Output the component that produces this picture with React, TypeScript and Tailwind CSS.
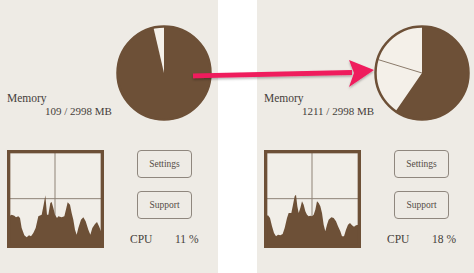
const brown = "#6d5037";

const wedge = (deg: number, r = 47, c = 48) => {
  const rad = (deg * Math.PI) / 180;
  const x = c - r * Math.sin(rad);
  const y = c - r * Math.cos(rad);
  return `M${c} ${c} L${c} ${c - r} A${r} ${r} 0 ${deg > 180 ? 1 : 0} 0 ${x.toFixed(2)} ${y.toFixed(2)} Z`;
};

const leftChart =
  "12,205 20,200 28,203 33,208 40,205 45,210 50,240 58,262 65,268 72,262 78,265 85,255 92,240 100,205 110,200 116,170 121,142 126,200 130,200 136,165 140,162 145,180 150,200 156,210 160,205 170,208 178,205 184,180 188,163 195,170 200,195 205,215 210,245 215,260 220,240 228,215 235,208 242,220 250,245 256,260 262,240 270,228 276,222 282,235 288,250 290,250";
const rightChart =
  "12,205 18,202 24,210 30,235 36,255 42,265 48,260 55,262 62,258 68,240 75,210 80,195 88,195 93,170 98,145 102,140 106,175 110,195 115,180 120,160 125,170 130,190 135,200 140,205 145,203 150,205 155,200 160,185 165,160 170,165 175,175 180,195 185,230 190,250 195,230 200,215 208,208 215,210 222,220 228,235 235,250 240,265 246,265 252,245 258,230 264,225 270,232 276,236 282,232 290,230";

function Pie({ used, marker }: { used: number; marker?: number }) {
  const deg = (used / 2998) * 360;
  const rad = ((marker ?? 0) * Math.PI) / 180;
  return (
    <svg width="96" height="96" viewBox="0 0 96 96">
      <circle cx="48" cy="48" r="47" fill={brown} />
      <path d={wedge(deg)} fill="#f4f0e9" />
      {marker !== undefined && (
        <line x1="48" y1="48" x2={48 - 46 * Math.sin(rad)} y2={48 - 46 * Math.cos(rad)} stroke="#8b7b6b" strokeWidth="1" />
      )}
      <circle cx="48" cy="48" r="46.5" fill="none" stroke={brown} strokeWidth="2.5" />
    </svg>
  );
}

function Chart({ points }: { points: string }) {
  return (
    <svg width="97" height="98" viewBox="6 6 291 294" className="shrink-0">
      <rect x="11" y="11" width="281" height="284" fill="#f1eee8" />
      <line x1="150" y1="11" x2="150" y2="295" stroke="#8f8377" strokeWidth="3" />
      <line x1="11" y1="152" x2="292" y2="152" stroke="#8f8377" strokeWidth="3" />
      <polygon points={`12,292 ${points} 292,292`} fill={brown} />
      <rect x="11" y="11" width="281" height="284" fill="none" stroke={brown} strokeWidth="10" />
    </svg>
  );
}

function Panel({ used, cpu, marker }: { used: number; cpu: number; marker?: number }) {
  return (
    <div className="w-[218px] h-[273px] shrink-0 bg-[#eeebe5] font-['Liberation_Serif',serif] text-[#45403a]">
      <div className="flex items-end">
        <div className="pl-[7px] pb-[5px] flex-1 whitespace-nowrap">
          <div className="text-[11.5px] leading-[10px]">Memory</div>
          <div className="text-[11px] leading-[10px] mt-[3px] ml-[38px]">{used} / 2998 MB</div>
        </div>
        <div className="mt-[25px] mr-[6px] shrink-0">
          <Pie used={used} marker={marker} />
        </div>
      </div>
      <div className="flex mt-[29px]">
        <div className="ml-[7px]">
          <Chart points={used > 500 ? rightChart : leftChart} />
        </div>
        <div className="ml-[26px] flex flex-col">
          <button className="ml-[7px] w-[55px] h-[28px] rounded-[4px] border border-[#8f877e] text-[9.5px] text-[#554d45]">
            Settings
          </button>
          <button className="ml-[7px] mt-[13px] w-[55px] h-[28px] rounded-[4px] border border-[#8f877e] text-[9.5px] text-[#554d45]">
            Support
          </button>
          <div className="mt-[14px] flex text-[11.5px] leading-[13px]">
            <span className="w-[45px]">CPU</span>
            <span>{cpu} %</span>
          </div>
        </div>
      </div>
    </div>
  );
}

export default function App() {
  return (
    <div className="relative flex w-[474px] h-[273px] bg-white overflow-hidden">
      <Panel used={109} cpu={11} />
      <div className="w-[39px] shrink-0" />
      <Panel used={1211} cpu={18} marker={73} />
      <svg className="absolute left-0 top-0 pointer-events-none" width="474" height="273">
        <defs>
          <filter id="sh" x="-10%" y="-50%" width="120%" height="200%">
            <feDropShadow dx="0" dy="1.5" stdDeviation="1.2" floodColor="#000" floodOpacity="0.3" />
          </filter>
        </defs>
        <g filter="url(#sh)" fill="#ef1b5d">
          <polygon points="193,73.5 352,70 352,75 193,78.2" />
          <polygon points="349,60 374,70 349,87 354,73" />
        </g>
      </svg>
    </div>
  );
}
